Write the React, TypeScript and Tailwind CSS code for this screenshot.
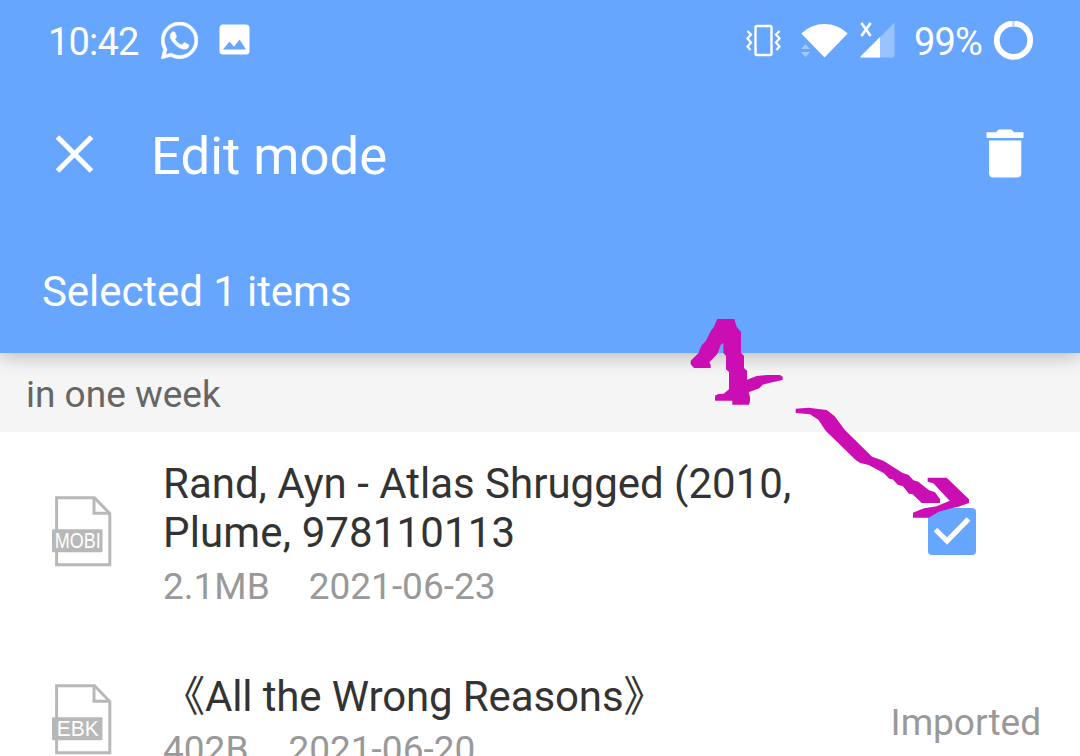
import React from 'react';

function WhatsAppIcon() {
  return (
    <svg className="mb-[2px] ml-[22px] h-[37px] w-[37px] shrink-0" viewBox="0 0 24 24" fill="#fff">
      <path d="M17.472 14.382c-.297-.149-1.758-.867-2.03-.967-.273-.099-.471-.148-.67.15-.197.297-.767.966-.94 1.164-.173.199-.347.223-.644.075-.297-.15-1.255-.463-2.39-1.475-.883-.788-1.48-1.761-1.653-2.059-.173-.297-.018-.458.13-.606.134-.133.298-.347.446-.52.149-.174.198-.298.298-.497.099-.198.05-.371-.025-.52-.075-.149-.669-1.612-.916-2.207-.242-.579-.487-.5-.669-.51-.173-.008-.371-.01-.57-.01-.198 0-.52.074-.792.372-.272.297-1.04 1.016-1.04 2.479 0 1.462 1.065 2.875 1.213 3.074.149.198 2.096 3.2 5.077 4.487.709.306 1.262.489 1.694.625.712.227 1.36.195 1.871.118.571-.085 1.758-.719 2.006-1.413.248-.694.248-1.289.173-1.413-.074-.124-.272-.198-.57-.347m-5.421 7.403h-.004a9.87 9.87 0 01-5.031-1.378l-.361-.214-3.741.982.998-3.648-.235-.374a9.86 9.86 0 01-1.51-5.26c.001-5.45 4.436-9.884 9.888-9.884 2.64 0 5.122 1.03 6.988 2.898a9.825 9.825 0 012.893 6.994c-.003 5.45-4.437 9.884-9.885 9.884m8.413-18.297A11.815 11.815 0 0012.05 0C5.495 0 .16 5.335.157 11.892c0 2.096.547 4.142 1.588 5.945L.057 24l6.305-1.654a11.882 11.882 0 005.683 1.448h.005c6.554 0 11.89-5.335 11.893-11.893a11.821 11.821 0 00-3.48-8.413z" stroke="#fff" strokeWidth="0.4" />
    </svg>
  );
}

function PictureIcon() {
  return (
    <svg className="mb-[3px] ml-[21px] h-[31px] w-[31px] shrink-0" viewBox="0 0 31 31">
      <rect x="0.5" y="0.5" width="30" height="30" rx="3.5" fill="#fff" />
      <path d="M4 25.5 10.5 17.5 15 22.8 20.5 15.5 27 25.5Z" fill="#66a6ff" />
    </svg>
  );
}

function StatusIcons() {
  return (
    <svg className="mb-[2px] h-[80px] w-[170px] shrink-0" viewBox="740 0 170 80" fill="none">
      <rect x="755.5" y="26" width="16" height="29" rx="1.5" stroke="#fff" strokeWidth="2.4" />
      <path d="M747.5 31 751 34.5 747.5 38.5 751 42.5 747.5 46.5 750.5 50M779.5 31 776 34.5 779.5 38.5 776 42.5 779.5 46.5 776.5 50" stroke="#fff" strokeWidth="2.2" />
      <path d="M801.3 33.5Q811 24 824.5 24T847.7 33.5L824.5 57.5Z" fill="#fff" />
      <path d="M801 49 805.5 44.2 810 49ZM801 52 805.5 57 810 52Z" fill="#a6cbff" />
      <path d="M894.5 22.5V55.5Q894.5 57.5 892.5 57.5H860Z" fill="#99c3ff" />
      <path d="M880 37V57.5H861.5Q859.5 57.5 861 56Z" fill="#fff" />
      <path d="M861.4 23 870.6 36M870.6 23 861.4 36" stroke="#fff" strokeWidth="2.7" />
    </svg>
  );
}

function FileIcon({ label }: { label: string }) {
  return (
    <svg className="h-[71px] w-[60px] shrink-0" viewBox="0 0 60 71">
      <path d="M4.6 1.8H42.5L57.8 17.5V68.8H4.6Z" fill="#fff" stroke="#b8b8b8" strokeWidth="3" />
      <path d="M42 1.9V17.2H58" fill="none" stroke="#b8b8b8" strokeWidth="3" />
      <rect x="0" y="33.3" width="50.5" height="23" rx="1" fill="#b8b8b8" />
      <text x="25.7" y="52.4" textAnchor="middle" textLength={label.length > 3 ? 46 : 42} lengthAdjust="spacingAndGlyphs" fontSize="22" fontFamily="'Liberation Sans', sans-serif" fill="#fff">
        {label}
      </text>
    </svg>
  );
}

function Annotation() {
  return (
    <svg className="pointer-events-none absolute left-[680px] top-[300px] h-[230px] w-[320px]" viewBox="0 0 960 690" fill="#ca0eb4">
      <path d="M112 57H163L170 80 183 96V158L192 168V204L201 212V239L230 228 260 225H300L308 230V240L270 248 248 254 238 265 206 277 210 290V303L207 314H157V302H105V287L115 282 131 281 147 268V216L138 208V168L130 158V128L122 136 112 162 88 187 92 194V204H42L32 193V182L55 160 65 136 78 122 92 94 101 82Z" />
      <path d="M347 326 385 323 440 330 464 349 494 389 576 470 610 482 668 519 686 525 700 541 715 545 746 570 765 577 780 597V609H725L698 583 687 581 668 558 654 555 638 538 628 536 612 520 566 495 541 489 527 480 437 392 415 359 390 343 347 339Z" />
      <path d="M743 533H800L867 598V609L835 620 814 625 776 635 746 653H699V638L720 629 733 625 770 619 809 602 760 550 743 545Z" />
    </svg>
  );
}

export default function App() {
  return (
    <div className="relative h-[756px] w-[1080px] overflow-hidden bg-white font-['Roboto','Noto_Sans_CJK_SC',sans-serif]">
      <header className="relative flex h-[353px] flex-col bg-[#66a6ff] text-white shadow-[0_4px_18px_rgba(0,0,0,0.24)]">
        <div className="flex h-[82px] items-center pl-[48px] text-[38px] leading-[82px]">
          <span className="w-[91px] whitespace-nowrap pt-[1px] tracking-[-0.8px]">10:42</span>
          <WhatsAppIcon />
          <PictureIcon />
          <div className="ml-auto flex items-center pr-[46px]">
            <StatusIcons />
            <span className="ml-[4px] w-[70px] whitespace-nowrap pt-[1px] tracking-[-0.8px]">99%</span>
            <svg className="mb-[1px] ml-[9px] h-[40px] w-[41px] shrink-0" viewBox="0 0 41 40" fill="none">
              <circle cx="20.5" cy="19.2" r="16.7" stroke="#fff" strokeWidth="5.8" />
              <path d="M20.3 0V6" stroke="#b3d3ff" strokeWidth="2" />
            </svg>
          </div>
        </div>
        <div className="flex h-[148px] items-center pl-[54px] pr-[56px]">
          <svg className="mb-[5px] h-[40px] w-[40px] shrink-0" viewBox="0 0 40 40" fill="none" stroke="#fff" strokeWidth="5">
            <path d="M3.5 3 37.5 37M37.5 3 3.5 37" />
          </svg>
          <h1 className="ml-[57px] text-[52.7px] leading-[62px]">Edit mode</h1>
          <svg className="mb-[4px] ml-auto h-[50px] w-[38px] shrink-0" viewBox="0 0 38 50" fill="#fff">
            <path d="M0.5 3.2H10L12.5 0.5H25.5L28 3.2H37.5V9H0.5Z" />
            <path d="M3 11.5H35.3V44Q35.3 48.5 30.8 48.5H7.5Q3 48.5 3 44Z" />
          </svg>
        </div>
        <div className="flex h-[123px] items-center pl-[42px] text-[42px] tracking-[-0.07px]">Selected 1 items</div>
      </header>

      <div className="flex h-[79px] items-center bg-[#f5f5f5] pl-[26px] pt-[5px] text-[37px] text-[#666]">in one week</div>

      <main>
        <div className="flex h-[213px] pl-[52px] pr-[104px]">
          <div className="pt-[64px]"><FileIcon label="MOBI" /></div>
          <div className="ml-[51px] whitespace-nowrap pt-[27px]">
            <div className="text-[42px] leading-[49px] text-[#333]">Rand, Ayn - Atlas Shrugged (2010,<br /><span className="tracking-[0.14px]">Plume, 978110113</span></div>
            <div className="mt-[8px] flex gap-[39px] text-[37px] leading-[44px] text-[#999]">
              <span>2.1MB</span><span>2021-06-23</span>
            </div>
          </div>
          <div className="ml-auto mt-[76px] h-[47px] w-[48px] rounded-[4px] bg-[#66a6ff]">
            <svg className="h-[47px] w-[48px]" viewBox="0 0 48 47" fill="none">
              <path d="M7.5 21.5 19 33 40.5 11" stroke="#fff" strokeWidth="5.2" />
            </svg>
          </div>
        </div>

        <div className="flex h-[213px] pl-[52px] pr-[39px]">
          <div className="pt-[39px]"><FileIcon label="EBK" /></div>
          <div className="ml-[51px] whitespace-nowrap pt-[27px]">
            <div className="h-[49px] text-[42px] leading-[49px] tracking-[-0.12px] text-[#333]">《All the Wrong Reasons》</div>
            <div className="mt-[7px] flex gap-[40px] text-[37px] leading-[44px] text-[#999]">
              <span>402B</span><span>2021-06-20</span>
            </div>
          </div>
          <div className="ml-auto pt-[56px] text-[37px] leading-[44px] text-[#999]">Imported</div>
        </div>
      </main>
      <Annotation />
    </div>
  );
}
